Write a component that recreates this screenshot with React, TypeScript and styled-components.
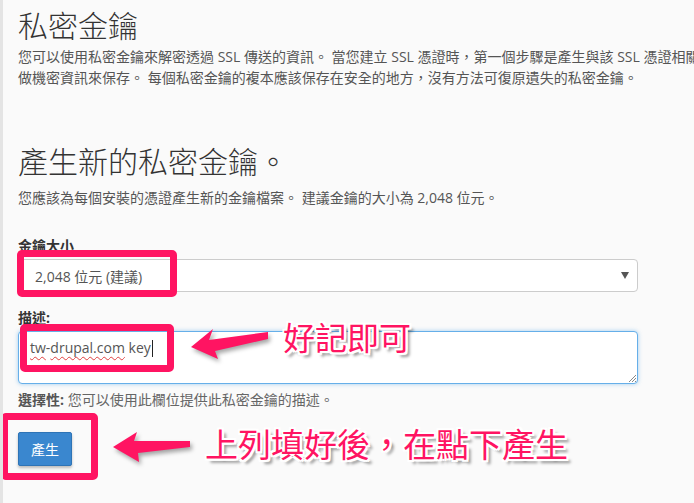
import React from 'react'
import styled, { createGlobalStyle } from 'styled-components'

const PINK = '#ff1462'
const FONT = '"Open Sans", "Noto Sans CJK TC", sans-serif'

const GlobalStyle = createGlobalStyle`
  html, body {
    margin: 0;
    padding: 0;
    background: #fafafa;
  }
  body {
    font-family: ${FONT};
    overflow: hidden;
  }
`

const Page = styled.div`
  position: relative;
  height: 503px;
  overflow: hidden;
  border-left: 3px solid #e4e4e4;
  padding: 9px 0 0 15px;
  box-sizing: border-box;
  display: flex;
  flex-direction: column;
  gap: 57px;
  color: #555;
`

const Section = styled.section<{ $gap: number }>`
  display: flex;
  flex-direction: column;
  gap: ${(p) => p.$gap}px;
`

const Title = styled.h1`
  margin: 0;
  font-size: 30px;
  font-weight: 300;
  line-height: 33px;
  color: #333;
`

const Lead = styled.p`
  margin: 0;
  font-size: 14px;
  line-height: 21px;
  white-space: nowrap;
`

const Form = styled.form`
  display: flex;
  flex-direction: column;
  align-items: flex-start;
  margin-top: 18px;
`

const Field = styled.div<{ $after: number }>`
  display: flex;
  flex-direction: column;
  gap: 3px;
  margin-bottom: ${(p) => p.$after}px;
`

const Label = styled.label`
  font-size: 14px;
  line-height: 21px;
  font-weight: 700;
  color: #333;
`

const SelectBox = styled.div`
  width: 620px;
  height: 33px;
  box-sizing: border-box;
  display: flex;
  align-items: center;
  justify-content: space-between;
  padding: 0 8px 0 16px;
  background: #fff;
  border: 1px solid #ccc;
  border-radius: 4px;
  font-size: 14px;
  color: #555;
`

const Caret = styled.svg`
  width: 8px;
  height: 7px;
  fill: #555;
`

const TextBox = styled.div`
  position: relative;
  width: 620px;
  height: 53px;
  box-sizing: border-box;
  padding: 6px 11px;
  background: #fff;
  border: 1px solid #66afe9;
  border-radius: 4px;
  box-shadow: 0 0 4px rgba(102, 175, 233, 0.6);
  font-size: 14px;
  line-height: 20px;
  color: #555;
`

const Misspelled = styled.span`
  text-decoration: underline wavy #e04040;
  text-decoration-thickness: 1px;
  text-underline-offset: 3px;
`

const Cursor = styled.span`
  display: inline-block;
  width: 1px;
  height: 17px;
  margin-left: 1px;
  vertical-align: -4px;
  background: #222;
`

const Grip = styled.svg`
  position: absolute;
  right: 1px;
  bottom: 1px;
  width: 8px;
  height: 8px;
  stroke: #888;
  stroke-width: 1;
`

const Help = styled.p`
  margin: 2px 0 0;
  font-size: 14px;
  line-height: 21px;
  color: #666;

  b {
    color: #555;
  }
`

const Button = styled.button`
  margin-top: 22px;
  width: 54px;
  height: 34px;
  padding: 0;
  background: #3a87cf;
  border: 1px solid #2e74b6;
  border-radius: 2px;
  box-shadow: 0 2px 3px rgba(0, 0, 0, 0.25);
  color: #fff;
  font-family: ${FONT};
  font-size: 14px;
`

/* annotation layer drawn over the screenshot */
const Mark = styled.div<{ $x: number; $y: number; $w: number; $h: number }>`
  position: absolute;
  left: ${(p) => p.$x}px;
  top: ${(p) => p.$y}px;
  width: ${(p) => p.$w}px;
  height: ${(p) => p.$h}px;
  box-sizing: border-box;
  border: 7px solid ${PINK};
  border-radius: 5px;
`

const Arrows = styled.svg`
  position: absolute;
  left: -3px;
  top: 0;
  width: 694px;
  height: 503px;
  fill: ${PINK};
  filter: drop-shadow(2px 3px 2px rgba(0, 0, 0, 0.35));
  pointer-events: none;
`

const Callout = styled.div<{ $x: number; $y: number; $size: number }>`
  position: absolute;
  left: ${(p) => p.$x - 3}px;
  top: ${(p) => p.$y}px;
  font-family: "Noto Sans CJK TC", sans-serif;
  font-size: ${(p) => p.$size}px;
  line-height: 1;
  white-space: nowrap;
  color: ${PINK};
  text-shadow:
    -2px 0 #fff, 2px 0 #fff, 0 -2px #fff, 0 2px #fff,
    -2px -2px #fff, 2px -2px #fff, -2px 2px #fff, 2px 2px #fff,
    4px 4px 3px rgba(0, 0, 0, 0.45);
`

export default function App() {
  return (
    <>
      <GlobalStyle />
      <Page>
        <Section $gap={4}>
          <Title>私密金鑰</Title>
          <Lead>
            您可以使用私密金鑰來解密透過 SSL 傳送的資訊。 當您建立 SSL 憑證時，第一個步驟是產生與該 SSL 憑證相關聯的私密金鑰。 您必須將私密金鑰當
            <br />
            做機密資訊來保存。 每個私密金鑰的複本應該保存在安全的地方，沒有方法可復原遺失的私密金鑰。
          </Lead>
        </Section>

        <Section $gap={9}>
          <Title>產生新的私密金鑰。</Title>
          <Lead>您應該為每個安裝的憑證產生新的金鑰檔案。 建議金鑰的大小為 2,048 位元。</Lead>

          <Form onSubmit={(e) => e.preventDefault()}>
            <Field $after={15}>
              <Label>金鑰大小</Label>
              <SelectBox>
                <span>2,048 位元 (建議)</span>
                <Caret viewBox="0 0 8 7">
                  <path d="M0 0h8L4 7z" />
                </Caret>
              </SelectBox>
            </Field>

            <Field $after={0}>
              <Label>描述:</Label>
              <TextBox>
                <Misspelled>tw</Misspelled>-<Misspelled>drupal.com</Misspelled> key
                <Cursor />
                <Grip viewBox="0 0 8 8">
                  <path d="M1 8L8 1M4 8L8 4M7 8L8 7" />
                </Grip>
              </TextBox>
              <Help>
                <b>選擇性:</b> 您可以使用此欄位提供此私密金鑰的描述。
              </Help>
            </Field>

            <Button>產生</Button>
          </Form>
        </Section>

        <Mark $x={14} $y={250} $w={160} $h={47} />
        <Mark $x={17} $y={324} $w={154} $h={48} />
        <Mark $x={-2} $y={413} $w={97} $h={67} />

        <Arrows viewBox="0 0 694 503">
          <polygon points="191,347 213,329 209,340 268,332 268,339 215,351 218,359" />
          <polygon points="113,447 137,432 134,441 190,441 190,447 138,453 139,462" />
        </Arrows>

        <Callout $x={283} $y={320} $size={32}>好記即可</Callout>
        <Callout $x={205} $y={427} $size={33}>上列填好後，在點下產生</Callout>
      </Page>
    </>
  )
}
